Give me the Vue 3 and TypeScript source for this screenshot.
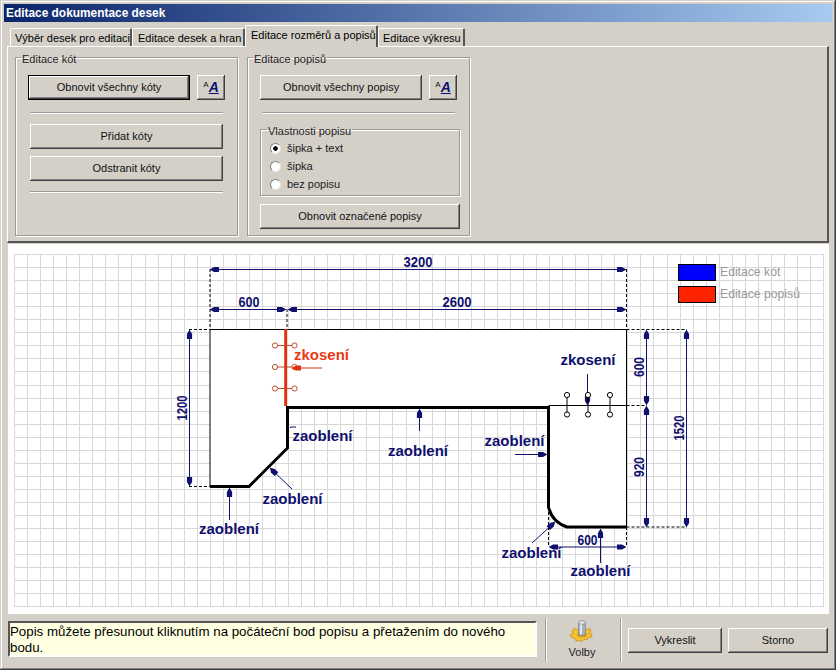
<template>
  <div class="window">
    <div class="titlebar">Editace dokumentace desek</div>

    <div class="tabs" role="tablist">
      <div
        v-for="tab in tabs"
        :key="tab.label"
        class="tab"
        :class="{ active: tab.active }"
        role="tab"
      >
        {{ tab.label }}
      </div>
    </div>

    <div class="panel">
      <fieldset class="group">
        <legend>Editace kót</legend>
        <div class="btn-row">
          <button class="btn default wide">Obnovit všechny kóty</button>
          <button class="btn font-btn"><sup>A</sup><b>A</b></button>
        </div>
        <hr class="sep first" />
        <div class="btn-stack">
          <button class="btn">Přidat kóty</button>
          <button class="btn">Odstranit kóty</button>
        </div>
        <hr class="sep last" />
      </fieldset>

      <fieldset class="group">
        <legend>Editace popisů</legend>
        <div class="btn-row">
          <button class="btn wide">Obnovit všechny popisy</button>
          <button class="btn font-btn"><sup>A</sup><b>A</b></button>
        </div>
        <hr class="sep first" />
        <fieldset class="group inner">
          <legend>Vlastnosti popisu</legend>
          <label v-for="opt in options" :key="opt" class="radio">
            <input v-model="popis" type="radio" name="popis" :value="opt" />
            {{ opt }}
          </label>
        </fieldset>
        <button class="btn full">Obnovit označené popisy</button>
      </fieldset>
    </div>

    <div class="canvas">
      <svg viewBox="8 244 821 370" width="821" height="370">
        <g class="grid">
          <line v-for="x in gridX" :key="'x' + x" :x1="x" :x2="x" y1="254" y2="606.5" />
          <line v-for="y in gridY" :key="'y' + y" :y1="y" :y2="y" x1="14" x2="823" />
        </g>

        <!-- board -->
        <path class="board" d="M210 329.5H626.5V527H567Q552 522 548.5 507V407.5H287.5V448L249 486.5H210Z" />
        <path class="thin" d="M210 486V329.5H626.5V527M548.5 405.5H626.5" />
        <path class="thick" d="M210 486.5H249L287.5 448V407.5H548.5V507Q552 522 567 527H626.5" />
        <line class="red-edge" x1="285.7" y1="329" x2="285.7" y2="406" />

        <path class="dash" d="M210 269V329M287 309V329M626.5 269V329M189 329.5H210M189 486.5H210M626.5 329.5H687M626.5 405.5H647M626.5 527H687M548.5 507V547M626.5 527V547" />

        <g v-for="d in dims" :key="d.x1 + '-' + d.y1 + '-' + d.x2 + '-' + d.y2">
          <line class="navy-line" :x1="d.x1" :y1="d.y1" :x2="d.x2" :y2="d.y2" />
          <polygon class="navy-fill" :points="head(d.x2, d.y2, d.x1, d.y1)" />
          <polygon class="navy-fill" :points="head(d.x1, d.y1, d.x2, d.y2)" />
        </g>

        <text
          v-for="t in dimTexts"
          :key="t.label + t.x + t.y"
          class="dim-text"
          :transform="t.rot ? `rotate(-90 ${t.x} ${t.y})` : undefined"
          :x="t.x"
          :y="t.y"
          :textLength="t.len"
          lengthAdjust="spacingAndGlyphs"
          text-anchor="middle"
          dominant-baseline="central"
        >{{ t.label }}</text>

        <!-- leaders -->
        <g v-for="a in leaders" :key="a.x1 + '-' + a.y1">
          <line class="navy-line" :x1="a.x1" :y1="a.y1" :x2="a.x2" :y2="a.y2" />
          <polygon class="navy-fill" :points="head(a.x2, a.y2, a.x1, a.y1)" />
        </g>
        <path class="navy-line" d="M290.5 428V427H296" />

        <text v-for="l in labels" :key="l.x" class="label" :x="l.x" :y="l.y">zaoblení</text>
        <text class="label" x="560.5" y="365">zkosení</text>

        <!-- handles of the selected chamfer -->
        <g class="handle black">
          <g v-for="x in [567, 588, 610]" :key="x">
            <line :x1="x" :x2="x" y1="395" y2="414" />
            <circle :cx="x" cy="395" r="2.6" />
            <circle :cx="x" cy="414.5" r="2.6" />
          </g>
        </g>
        <g class="handle red">
          <g v-for="y in [345.5, 367, 388.5]" :key="y">
            <line x1="275" x2="294" :y1="y" :y2="y" />
            <circle cx="275" :cy="y" r="2.6" />
            <circle cx="294.5" :cy="y" r="2.6" />
          </g>
        </g>
        <line class="red-line" x1="322" y1="368" x2="292" y2="368" />
        <polygon class="red-fill" :points="head(292, 368, 322, 368)" />
        <text class="label red-text" x="294" y="360">zkosení</text>

        <!-- legend -->
        <rect class="swatch" x="678.5" y="264.5" width="37" height="16" fill="#0000ff" />
        <rect class="swatch" x="678.5" y="286.5" width="37" height="16" fill="#ff2400" />
        <text class="legend-text" x="720" y="276">Editace kót</text>
        <text class="legend-text" x="720" y="298">Editace popisů</text>
      </svg>
    </div>

    <div class="footer">
      <div class="hint">Popis můžete přesunout kliknutím na počáteční bod popisu a přetažením do nového bodu.</div>
      <div class="vsep"></div>
      <div class="options-btn">
        <svg viewBox="0 0 26 26" width="26" height="26">
          <path fill="#f2c230" stroke="#c08a10" stroke-width=".7" d="M5 9.5 9 11l2-2 4 0 2 2 4-1.5 1 2.5-2 1.5 3 1.5-.5 3-3.5.5-1 2.5-3-.5-2 2-3-1-3 .5-1-2.5-3.5-1L1 16l3-1.5L3 12.5Z" />
          <ellipse cx="13" cy="16" rx="5" ry="2.4" fill="#d99a18" />
          <path fill="#a9b0bc" stroke="#6f7786" stroke-width=".6" d="M9.5 3.5v11.5c0 2 7 2 7 0V3.5Z" />
          <ellipse cx="13" cy="3.5" rx="3.5" ry="1.8" fill="#dfe3ea" stroke="#6f7786" stroke-width=".6" />
          <rect x="11" y="5.5" width="2" height="10" fill="#e3e6ec" />
        </svg>
        <span>Volby</span>
      </div>
      <div class="vsep"></div>
      <div class="actions">
        <button class="btn draw">Vykreslit</button>
        <button class="btn cancel">Storno</button>
      </div>
    </div>
  </div>
</template>

<script setup lang="ts">
import { ref } from "vue";

interface Segment {
  x1: number;
  y1: number;
  x2: number;
  y2: number;
}

const tabs = [
  { label: "Výběr desek pro editaci" },
  { label: "Editace desek a hran" },
  { label: "Editace rozměrů a popisů", active: true },
  { label: "Editace výkresu" },
];

const options = ["šipka + text", "šipka", "bez popisu"];
const popis = ref("šipka + text");

const GRID_STEP = 13.05;
const gridX = Array.from({ length: 63 }, (_, i) => Math.round(14 + i * GRID_STEP) + 0.5);
const gridY = Array.from({ length: 28 }, (_, i) => Math.round(254 + i * GRID_STEP) + 0.5);

const dims: Segment[] = [
  { x1: 210, y1: 269.5, x2: 626, y2: 269.5 },
  { x1: 210, y1: 309.5, x2: 286, y2: 309.5 },
  { x1: 288, y1: 309.5, x2: 626, y2: 309.5 },
  { x1: 189.5, y1: 330, x2: 189.5, y2: 486 },
  { x1: 646.5, y1: 330, x2: 646.5, y2: 405 },
  { x1: 646.5, y1: 406, x2: 646.5, y2: 527 },
  { x1: 686.5, y1: 330, x2: 686.5, y2: 527 },
  { x1: 549, y1: 547, x2: 626, y2: 547 },
];

const dimTexts = [
  { label: "3200", x: 418, y: 261, len: 29 },
  { label: "600", x: 249, y: 301, len: 21 },
  { label: "2600", x: 457, y: 301, len: 29 },
  { label: "1200", x: 181, y: 408, len: 25, rot: true },
  { label: "600", x: 638, y: 367, len: 20, rot: true },
  { label: "920", x: 638, y: 467, len: 20, rot: true },
  { label: "1520", x: 678, y: 428, len: 25, rot: true },
  { label: "600", x: 587.5, y: 539, len: 20 },
];

const leaders: Segment[] = [
  { x1: 229.5, y1: 520, x2: 229.5, y2: 488 },
  { x1: 292, y1: 489, x2: 270, y2: 468 },
  { x1: 419.5, y1: 431, x2: 419.5, y2: 409 },
  { x1: 515, y1: 454.5, x2: 547, y2: 454.5 },
  { x1: 532, y1: 543, x2: 555, y2: 522 },
  { x1: 600.5, y1: 563, x2: 600.5, y2: 529 },
  { x1: 587.5, y1: 374, x2: 587.5, y2: 405 },
];

const labels = [
  { x: 199, y: 534 },
  { x: 262.5, y: 504 },
  { x: 292.5, y: 441 },
  { x: 388, y: 456 },
  { x: 484.5, y: 446 },
  { x: 501.5, y: 558 },
  { x: 570.5, y: 576 },
];

// blunt arrow head with its tip at (x, y), pointing away from (fromX, fromY)
function head(x: number, y: number, fromX: number, fromY: number): string {
  const length = Math.hypot(x - fromX, y - fromY);
  const ux = (x - fromX) / length;
  const uy = (y - fromY) / length;
  const shape = [
    [1, 0.8],
    [4, 2.6],
    [9, 2.6],
    [9, -2.6],
    [4, -2.6],
    [1, -0.8],
  ];
  return shape
    .map(([back, side]) => `${x - ux * back - uy * side},${y - uy * back + ux * side}`)
    .join(" ");
}
</script>

<style>
body {
  margin: 0;
}
</style>

<style scoped>
.window {
  width: 836px;
  height: 670px;
  box-sizing: border-box;
  padding: 4px;
  background: #d4d0c8;
  box-shadow: inset -1px -1px 0 #404040, inset 1px 1px 0 #d4d0c8, inset -2px -2px 0 #808080, inset 2px 2px 0 #fff;
  font: 11px "Liberation Sans", Arial, sans-serif;
  color: #000;
  display: flex;
  flex-direction: column;
  overflow: hidden;
}

.titlebar {
  height: 18px;
  flex: none;
  padding-left: 2px;
  font-size: 11.9px;
  line-height: 18px;
  font-weight: bold;
  color: #fff;
  background: linear-gradient(90deg, #0a246a, #a6caf0);
}

.tabs {
  display: flex;
  align-items: flex-end;
  flex: none;
  height: 24px;
  padding-left: 6px;
  position: relative;
  z-index: 1;
}

.tab {
  box-sizing: border-box;
  height: 18px;
  padding: 0 2px 0 4px;
  line-height: 18px;
  white-space: nowrap;
  background: #d4d0c8;
  border-top: 1px solid #fff;
  border-left: 1px solid #fff;
  border-right: 2px solid #555;
  border-radius: 2px 2px 0 0;
}

.tab.active {
  height: 22px;
  margin-bottom: -1px;
  padding: 0 2px 3px 5px;
  line-height: 19px;
}

.tab:nth-child(1) {
  width: 122px;
}

.tab:nth-child(2) {
  width: 113px;
  padding-left: 5px;
}

.tab:nth-child(3) {
  width: 133px;
}

.tab:nth-child(4) {
  width: 87px;
}

.panel {
  flex: none;
  box-sizing: border-box;
  height: 197px;
  margin: 0 3px;
  padding: 1px 0 0 7px;
  display: grid;
  grid-template-columns: 223px 223px;
  gap: 9px;
  align-content: start;
  border-top: 1px solid #fff;
  border-left: 1px solid #fff;
  border-right: 2px solid #555;
  border-bottom: 2px solid #555;
}

.group {
  margin: 0;
  min-width: 0;
  box-sizing: border-box;
  height: 188px;
  padding: 9px 12px 0 12px;
  border: 1px solid #9a9a96;
  box-shadow: 1px 1px 0 #fff, inset 1px 1px 0 #fff;
}

.group legend {
  padding: 4px 1px 0;
  margin-left: -7px;
  line-height: 14px;
  color: #222;
}

/* negative top margin collapses with the separator's bottom margin */
.group.inner {
  width: 200px;
  height: 76px;
  margin: -4px 0 0;
  padding: 1px 0 0 9px;
}

.group.inner legend {
  margin-left: -3px;
}

.btn {
  box-sizing: border-box;
  height: 25px;
  padding: 0 0 2px;
  border: 0;
  background: #d4d0c8;
  font: inherit;
  color: #111;
  box-shadow: inset -1px -1px 0 #404040, inset 1px 1px 0 #fff, inset -2px -2px 0 #808080;
}

.btn.default {
  box-shadow: inset 0 0 0 1px #000, inset -2px -2px 0 #404040, inset 2px 2px 0 #fff, inset -3px -3px 0 #808080;
}

.btn-row {
  display: flex;
  gap: 7px;
}

.wide {
  width: 163px;
}

.font-btn {
  width: 28px;
}

.font-btn sup {
  font-size: 8px;
  vertical-align: 5px;
  line-height: 0;
}

.font-btn b {
  font: italic bold 14px "Liberation Sans", Arial, sans-serif;
  color: #10106e;
  text-decoration: underline;
}

.sep {
  height: 0;
  width: 193px;
  margin: 12px 0 10px 2px;
  border: 0;
  border-top: 1px solid #9a9a96;
  border-bottom: 1px solid #fff;
}

.sep.first {
  margin-top: 12px;
}

.sep.last {
  margin-top: 10px;
}

.btn-stack {
  display: flex;
  flex-direction: column;
  gap: 7px;
  margin-left: 2px;
}

.btn-stack .btn {
  width: 193px;
}

.radio {
  display: flex;
  align-items: center;
  gap: 6px;
  height: 18px;
  color: #222;
}

.radio input {
  appearance: none;
  flex: none;
  width: 11px;
  height: 11px;
  margin: 0;
  border-radius: 50%;
  background: #fff;
  border: 1px solid;
  border-color: #808080 #e8e6e0 #e8e6e0 #808080;
}

.radio input:checked {
  background: radial-gradient(circle, #000 0 2px, #fff 2.5px);
}

.btn.full {
  width: 200px;
  margin-top: 8px;
}

.canvas {
  flex: none;
  width: 821px;
  height: 370px;
  margin: 1px 0 0 4px;
  background: #fff;
}

.canvas svg {
  display: block;
}

.grid line {
  stroke: #d8d8d8;
  stroke-width: 1;
  shape-rendering: crispEdges;
}

.board {
  fill: #fff;
}

.thin {
  fill: none;
  stroke: #000;
  stroke-width: 1;
}

.thick {
  fill: none;
  stroke: #000;
  stroke-width: 3;
}

.red-edge {
  stroke: #e03010;
  stroke-width: 3;
}

.dash {
  fill: none;
  stroke: #000;
  stroke-width: 1;
  stroke-dasharray: 3 2;
}

.navy-line {
  fill: none;
  stroke: #10106e;
  stroke-width: 1;
}

.navy-fill {
  fill: #10106e;
}

.dim-text {
  font: bold 15px "Liberation Sans", Arial, sans-serif;
  fill: #10106e;
}

.label {
  font: bold 15px "Liberation Sans", Arial, sans-serif;
  fill: #10106e;
}

.red-text {
  fill: #e83a18;
}

.handle line,
.handle circle {
  fill: #fff;
  stroke-width: 1;
}

.handle.black line,
.handle.black circle {
  stroke: #000;
}

.handle.red line,
.handle.red circle {
  stroke: #c04a30;
}

.red-line {
  stroke: #e03010;
  stroke-width: 1;
}

.red-fill {
  fill: #e03010;
}

.swatch {
  stroke: #000;
  stroke-width: 1;
}

.legend-text {
  font: 12.2px "Liberation Sans", Arial, sans-serif;
  fill: #999;
}

.footer {
  flex: 1;
  display: flex;
  align-items: flex-start;
  padding: 7px 0 0 4px;
}

.hint {
  box-sizing: border-box;
  width: 529px;
  height: 36px;
  padding: 1px 0 1px;
  font-size: 13.3px;
  line-height: 16px;
  background: #ffffe1;
  border: 2px solid;
  border-color: #555 #fff #fff #555;
}

.vsep {
  flex: none;
  width: 0;
  height: 44px;
  margin: -3px 0 0 8px;
  border-left: 1px solid #9a9a96;
  border-right: 1px solid #fff;
}

.options-btn {
  flex: none;
  box-sizing: border-box;
  width: 65px;
  margin: -2px 0 0 0;
  padding-left: 5px;
  display: flex;
  flex-direction: column;
  align-items: center;
  color: #222;
}

.options-btn span {
  margin-top: 1px;
}

.actions {
  display: flex;
  gap: 6px;
  margin: 7px 0 0 6px;
}

.draw {
  width: 94px;
}

.cancel {
  width: 100px;
}
</style>
